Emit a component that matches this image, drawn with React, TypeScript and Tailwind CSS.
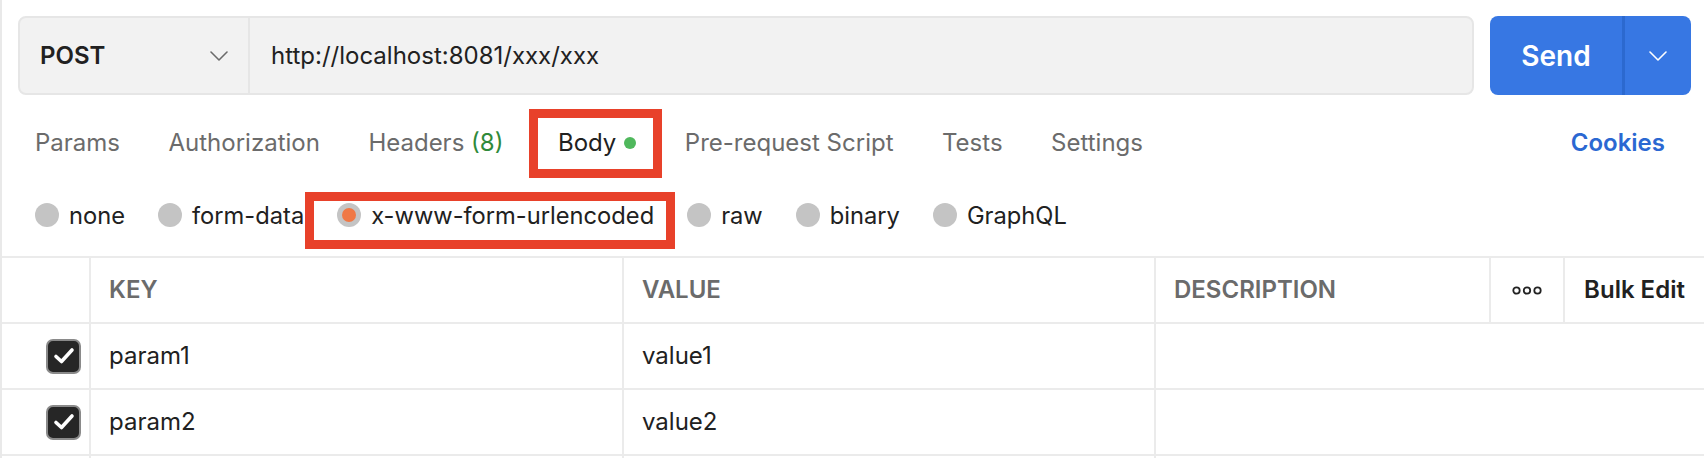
import React from "react";

const tabs = ["Params", "Authorization", "Headers", "Body", "Pre-request Script", "Tests", "Settings"];
const bodyTypes = ["none", "form-data", "x-www-form-urlencoded", "raw", "binary", "GraphQL"];

const rows = [
  { key: "param1", value: "value1" },
  { key: "param2", value: "value2" },
];

const Chevron = ({ className }: { className?: string }) => (
  <svg width="18" height="10" viewBox="0 0 18 10" className={className} fill="none">
    <polyline points="1,1 9,9 17,1" stroke="currentColor" strokeWidth="1.6" strokeLinecap="round" strokeLinejoin="round" />
  </svg>
);

// rectangle rouge d'annotation, posé par-dessus l'élément
const Highlight = ({ className }: { className: string }) => (
  <span className={`pointer-events-none absolute border-[9px] border-[#e8412a] ${className}`} />
);

const Radio = ({ checked }: { checked?: boolean }) => (
  <span className="flex h-6 w-6 items-center justify-center rounded-full bg-[#c4c4c4]">
    {checked && <span className="h-[14px] w-[14px] rounded-full bg-[#f07845]" />}
  </span>
);

const Checkbox = () => (
  <span className="flex h-[35px] w-[35px] items-center justify-center rounded-[7px] border-2 border-[#8a8a8a] bg-[#262626]">
    <svg width="22" height="18" viewBox="0 0 22 18" fill="none">
      <polyline points="3,9.5 8.5,14.5 19,3" stroke="white" strokeWidth="3.6" strokeLinecap="round" strokeLinejoin="round" />
    </svg>
  </span>
);

export default function App() {
  return (
    <div className="h-[458px] w-[1704px] overflow-hidden border-l-2 border-[#e9e9e9] bg-white font-['Inter',sans-serif] text-[#212121]">
      {/* barre de requête */}
      <div className="flex h-[95px] items-end gap-4 pl-4 pr-[13px]">
        <div className="flex h-[79px] flex-1 rounded-lg border-2 border-[#e6e6e6] bg-[#f2f2f2]">
          <div className="flex w-[230px] items-center justify-between border-r-2 border-[#e6e6e6] pl-5 pr-[20px]">
            <span className="text-[24px] font-semibold">POST</span>
            <Chevron className="text-[#6b6b6b]" />
          </div>
          <div className="flex items-center pl-[21px] text-[24px]">http://localhost:8081/xxx/xxx</div>
        </div>
        <div className="flex h-[79px] w-[201px] rounded-lg bg-[#3777e3] text-white">
          <div className="flex w-[135px] items-center justify-center border-r-[3px] border-[#2c69cf] text-[28px] font-semibold">
            Send
          </div>
          <div className="flex flex-1 items-center justify-center">
            <Chevron />
          </div>
        </div>
      </div>

      {/* onglets */}
      <div className="flex h-[95px] items-center justify-between pl-[33px] pr-[39px] text-[24px]">
        <div className="flex items-center gap-[48.5px] text-[#6b6b6b]">
          {tabs.map((t) =>
            t === "Headers" ? (
              <span key={t}>
                Headers <span className="text-[#2f8a3a]">(8)</span>
              </span>
            ) : t === "Body" ? (
              <span key={t} className="relative ml-[6px] flex items-center gap-2 text-[#212121]">
                Body
                <span className="h-3 w-3 rounded-full bg-[#4fb85c]" />
                <Highlight className="-bottom-[17px] -left-[29px] -right-[26px] -top-[16px]" />
              </span>
            ) : (
              <span key={t}>{t}</span>
            )
          )}
        </div>
        <span className="text-[24px] font-semibold text-[#2b68d2]">Cookies</span>
      </div>

      {/* type de body */}
      <div className="flex h-[51px] items-center gap-[33px] pl-[33px] text-[23.7px]">
        {bodyTypes.map((b) => (
          <label key={b} className="relative flex items-center gap-[10px]">
            <Radio checked={b === "x-www-form-urlencoded"} />
            <span>{b}</span>
            {b === "x-www-form-urlencoded" && (
              <Highlight className="-bottom-[16px] -left-[32px] -right-[21px] -top-[6px]" />
            )}
          </label>
        ))}
      </div>

      {/* tableau */}
      <div className="mt-[15px] border-t-2 border-[#ebebeb]">
        <div className="flex h-[66px] border-b-2 border-[#ebebeb] text-[24px] font-semibold uppercase text-[#6b6b6b]">
          <div className="w-[89px] border-r-2 border-[#ebebeb]" />
          <div className="flex w-[533px] items-center border-r-2 border-[#ebebeb] pl-[18px]">Key</div>
          <div className="flex w-[532px] items-center border-r-2 border-[#ebebeb] pl-[18px]">Value</div>
          <div className="flex w-[335px] items-center border-r-2 border-[#ebebeb] pl-[18px]">Description</div>
          <div className="flex w-[74px] items-center justify-center border-r-2 border-[#ebebeb]">
            <svg width="30" height="9" viewBox="0 0 30 9" fill="none">
              <circle cx="4.5" cy="4.5" r="3.2" stroke="#222" strokeWidth="1.8" />
              <circle cx="15" cy="4.5" r="3.2" stroke="#222" strokeWidth="1.8" />
              <circle cx="25.5" cy="4.5" r="3.2" stroke="#222" strokeWidth="1.8" />
            </svg>
          </div>
          <div className="flex flex-1 items-center justify-center normal-case text-[#212121]">Bulk Edit</div>
        </div>
        {rows.map((r) => (
          <div key={r.key} className="flex h-[66px] border-b-2 border-[#ebebeb] text-[24px]">
            <div className="flex w-[89px] items-center justify-end border-r-2 border-[#ebebeb] pr-2">
              <Checkbox />
            </div>
            <div className="flex w-[533px] items-center border-r-2 border-[#ebebeb] pl-[18px]">{r.key}</div>
            <div className="flex w-[532px] items-center border-r-2 border-[#ebebeb] pl-[18px]">{r.value}</div>
            <div className="flex-1" />
          </div>
        ))}
        <div className="flex h-[66px] border-b-2 border-[#ebebeb]">
          <div className="w-[89px] border-r-2 border-[#ebebeb]" />
          <div className="w-[533px] border-r-2 border-[#ebebeb]" />
          <div className="w-[532px] border-r-2 border-[#ebebeb]" />
        </div>
      </div>
    </div>
  );
}
